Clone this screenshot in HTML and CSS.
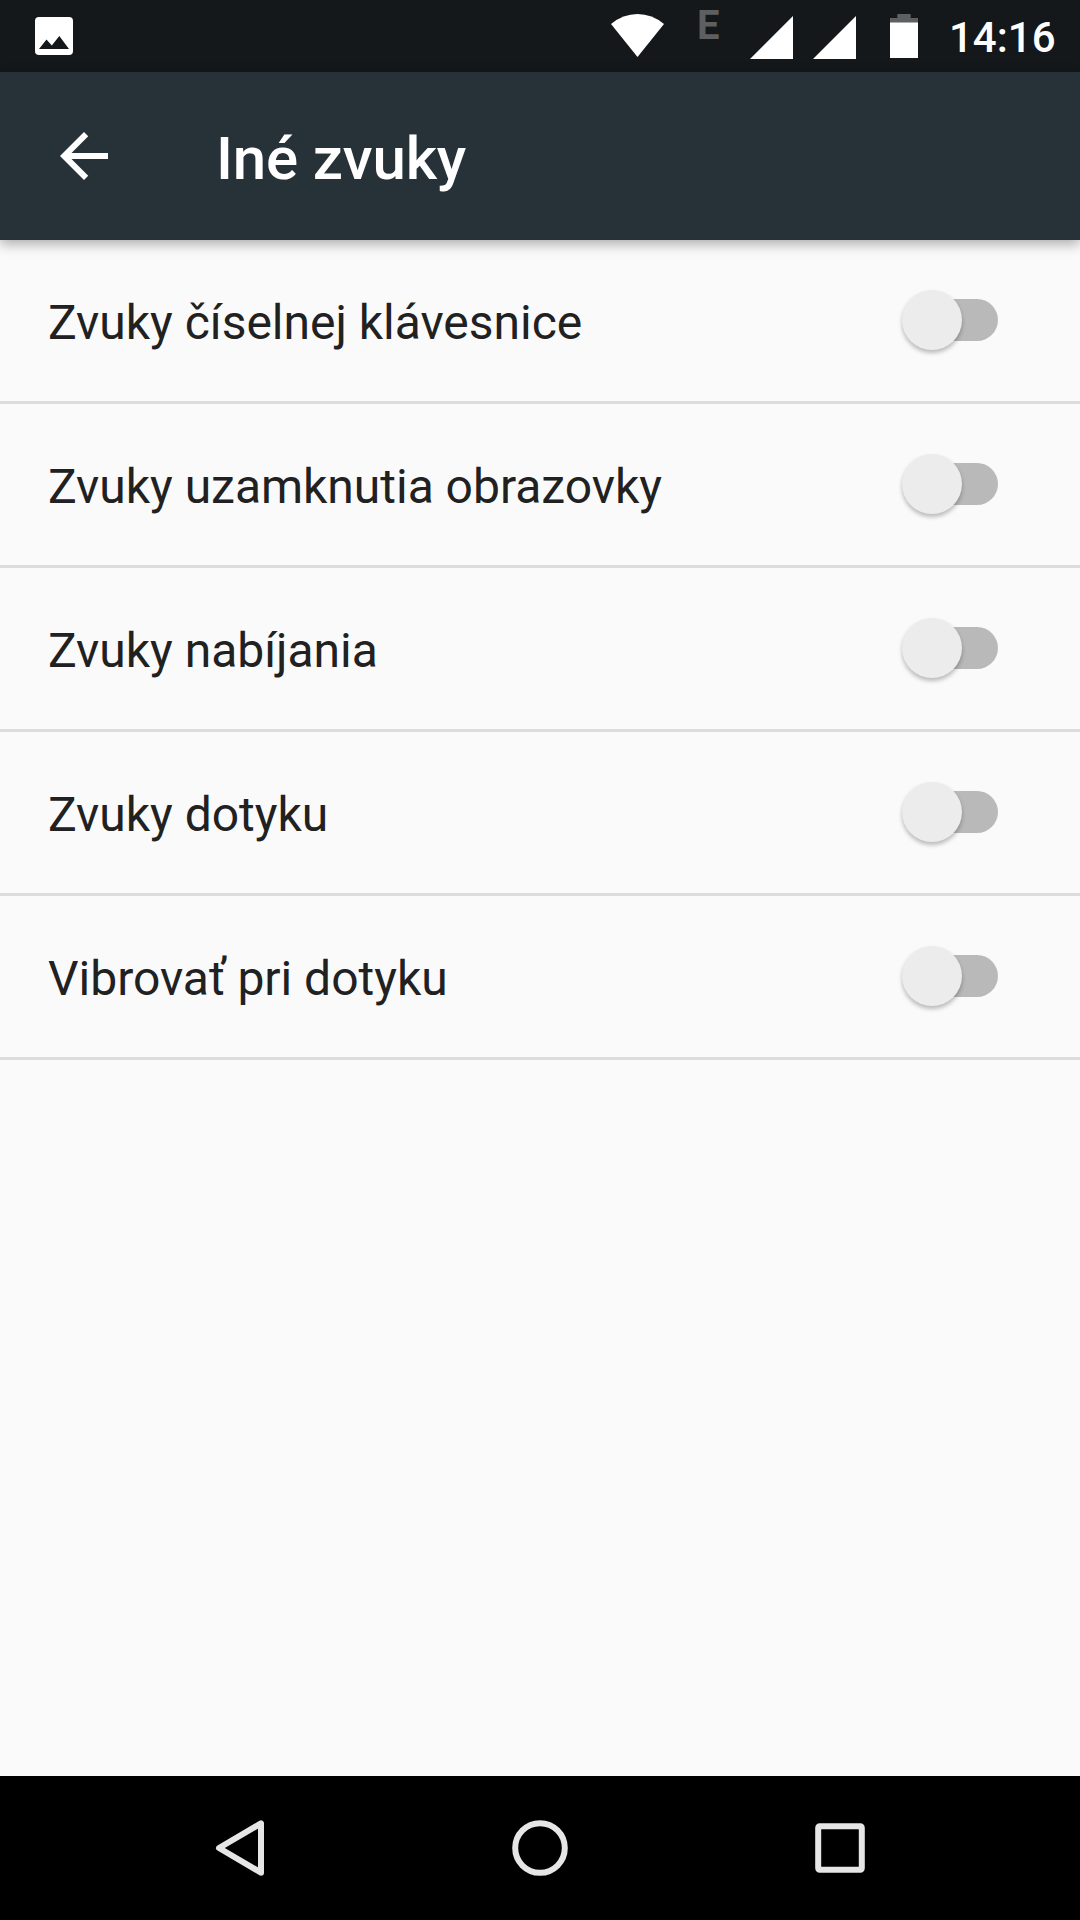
FILE: index.html
```html
<!DOCTYPE html>
<html lang="sk">

<head>
    <meta charset="UTF-8">
    <meta name="viewport" content="width=device-width, initial-scale=1.0">
    <title>Iné zvuky</title>
    <link rel="stylesheet" href="styles.css">
</head>

<body>
    <div class="statusbar">
        <svg class="icon-image" width="38" height="38" viewBox="0 0 38 38">
            <rect width="38" height="38" rx="4" fill="#fff" />
            <path d="M4 32L11.5 22.5L16.8 28.5L24.3 19L34 32z" fill="#14181b" />
        </svg>
        <div class="status-right">
            <svg class="icon-wifi" width="54" height="44" viewBox="0 0 54 44">
                <path d="M0 10Q12 0 26.5 0T53 10L26.5 43z" fill="#fff" />
            </svg>
            <span class="network">E</span>
            <svg class="icon-signal" width="43" height="43" viewBox="0 0 43 43">
                <path d="M43 0V43H0z" fill="#fff" />
            </svg>
            <svg class="icon-signal" width="43" height="43" viewBox="0 0 43 43">
                <path d="M43 0V43H0z" fill="#fff" />
            </svg>
            <svg class="icon-battery" width="28" height="44" viewBox="0 0 28 44">
                <path d="M7.3 0H20.7V4H28V9H0V4H7.3z" fill="#5d5f61" />
                <path d="M0 8.5H28V44H0z" fill="#fff" />
            </svg>
            <span class="time">14:16</span>
        </div>
    </div>

    <div class="toolbar">
        <svg width="72" height="72" viewBox="0 0 24 24">
            <path d="M20 11H7.83l5.59-5.59L12 4l-8 8 8 8 1.41-1.41L7.83 13H20v-2z" fill="#fff" />
        </svg>
        <h1>Iné zvuky</h1>
    </div>

    <ul class="list">
        <li><span>Zvuky číselnej klávesnice</span><div class="switch"></div></li>
        <li><span>Zvuky uzamknutia obrazovky</span><div class="switch"></div></li>
        <li><span>Zvuky nabíjania</span><div class="switch"></div></li>
        <li><span>Zvuky dotyku</span><div class="switch"></div></li>
        <li><span>Vibrovať pri dotyku</span><div class="switch"></div></li>
    </ul>

    <div class="navbar">
        <svg width="60" height="60" viewBox="0 0 60 60">
            <path d="M51 5.3V54.7L9 30z" />
        </svg>
        <svg width="60" height="60" viewBox="0 0 60 60">
            <circle cx="30" cy="30" r="24.8" />
        </svg>
        <svg width="60" height="60" viewBox="0 0 60 60">
            <rect x="8.2" y="8.2" width="43.6" height="43.6" rx="1.5" />
        </svg>
    </div>
</body>

</html>
```
FILE: styles.css
```css
* {
    margin: 0;
    padding: 0;
    box-sizing: border-box;
}

body {
    display: flex;
    flex-direction: column;
    height: 1920px;
    background-color: #fafafa;
    font-family: Roboto, sans-serif;
    overflow: hidden;
}

svg {
    display: block;
    flex: none;
}

.statusbar {
    display: flex;
    justify-content: space-between;
    height: 72px;
    padding: 0 26px 0 35px;
    background-color: #14181b;
    color: #fff;
}

.icon-image {
    margin-top: 17px;
}

.status-right {
    display: flex;
}

.icon-wifi {
    margin-top: 14px;
}

.network {
    width: 25px;
    margin: 0 28px 0 32px;
    font-size: 40px;
    line-height: 51px;
    font-weight: 700;
    color: #5d5f61;
}

.icon-signal {
    margin: 16px 20px 0 0;
}

.icon-battery {
    margin: 14px 31px 0 14px;
}

.time {
    width: 105px;
    font-size: 42px;
    line-height: 75px;
    font-weight: 500;
}

.toolbar {
    display: flex;
    align-items: center;
    height: 168px;
    padding-left: 48px;
    background-color: #263238;
    color: #fff;
    box-shadow: 0 4px 12px rgba(0, 0, 0, 0.32);
}

.toolbar h1 {
    margin: 4px 0 0 96px;
    font-size: 60px;
    font-weight: 500;
    letter-spacing: -0.15px;
}

.list {
    flex: 1;
    list-style: none;
}

.list li {
    display: flex;
    align-items: center;
    justify-content: space-between;
    height: 164px;
    padding: 0 82px 0 48px;
    border-bottom: 3px solid #dcdcdc;
    font-size: 48px;
    letter-spacing: -0.02px;
    color: #212121;
}

.list span {
    padding-top: 4px;
}

.switch {
    position: relative;
    width: 84px;
    height: 42px;
    margin-bottom: 2px;
    border-radius: 21px;
    background-color: #b9b9b9;
}

.switch::before {
    content: "";
    position: absolute;
    left: -12px;
    top: -8.5px;
    width: 60px;
    height: 60px;
    border-radius: 50%;
    background-color: #ececec;
    box-shadow: 0 3px 4px rgba(0, 0, 0, 0.26);
}

.navbar {
    display: flex;
    justify-content: center;
    gap: 240px;
    align-items: center;
    height: 144px;
    background-color: #000;
}

.navbar svg {
    fill: none;
    stroke: #e6e6e6;
    stroke-width: 6;
    stroke-linejoin: round;
}
```
